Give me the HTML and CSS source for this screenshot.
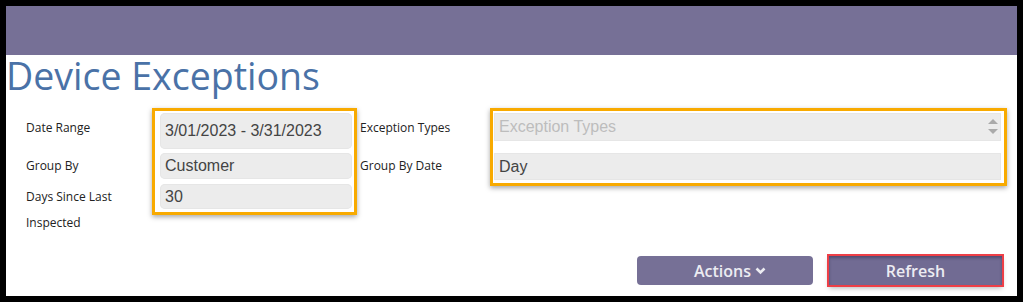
FILE: index.html
```html
<!DOCTYPE html>
<html lang="en">
<head>
  <meta charset="UTF-8">
  <title>Device Exceptions</title>
  <link rel="stylesheet" href="styles.css">
</head>
<body>
  <div class="frame">
    <div class="topbar"></div>
    <h1 class="title">Device Exceptions</h1>

    <div class="filters">
      <div class="label-col">
        <div class="lbl lbl-first">Date Range</div>
        <div class="lbl lbl-second">Group By</div>
        <div class="lbl lbl-wrap">Days Since Last<br>Inspected</div>
      </div>

      <div class="field-box box-left">
        <div class="field field-date">3/01/2023 - 3/31/2023</div>
        <div class="field field-group">Customer</div>
        <div class="field field-days">30</div>
      </div>

      <div class="label-col label-col-2">
        <div class="lbl lbl-first">Exception Types</div>
        <div class="lbl lbl-second">Group By Date</div>
      </div>

      <div class="field-box box-right">
        <div class="field field-types">
          <span class="placeholder">Exception Types</span>
          <span class="spinner">
            <svg width="12" height="18" viewBox="0 0 12 18">
              <path d="M1 6 L6 1 L11 6 Z" fill="#aaaaaa"/>
              <path d="M1 11 L11 11 L6 16 Z" fill="#aaaaaa"/>
            </svg>
          </span>
        </div>
        <div class="field field-bydate">Day</div>
      </div>
    </div>

    <div class="actions-row">
      <button class="btn btn-actions">Actions
        <svg class="chev" width="11" height="8" viewBox="0 0 11 8">
          <path d="M1.5 1.5 L5.5 5.5 L9.5 1.5" fill="none" stroke="#ececf2" stroke-width="2.6"/>
        </svg>
      </button>
      <button class="btn btn-refresh">Refresh</button>
    </div>
  </div>
</body>
</html>
```

FILE: styles.css
```css
* {
  box-sizing: border-box;
}
html, body {
  margin: 0;
  padding: 0;
  background-color: #000;
}
body {
  font-family: 'Open Sans', 'DejaVu Sans', sans-serif;
  color: #222;
}
.frame {
  margin: 6px;
  height: 290px;
  background-color: #fff;
}
.topbar {
  height: 49px;
  background-color: #767096;
}
.title {
  margin: -2px 0 9px 0;
  font-size: 37.5px;
  line-height: 46px;
  font-weight: 400;
  color: #4a72a7;
}
.filters {
  display: flex;
  align-items: flex-start;
  padding-left: 20px;
}
.label-col {
  width: 126px;
  font-size: 12px;
}
.label-col-2 {
  width: 133px;
  padding-left: 3px;
}
.lbl {
  line-height: 20px;
}
.lbl-first {
  margin-top: 10px;
}
.lbl-second {
  margin-top: 18px;
}
.lbl-wrap {
  margin-top: 8px;
  line-height: 26px;
}
.field-box {
  border: 3px solid #f8aa00;
  box-shadow: 0 2px 5px rgba(0, 0, 0, 0.35);
}
.box-left {
  width: 205px;
  padding: 2px 2px 3px 5px;
}
.box-right {
  width: 517px;
  padding: 2px 3px 3px 1px;
}
.field {
  display: flex;
  align-items: center;
  padding: 0 5px;
  background-color: #ececec;
  border-radius: 5px;
  box-shadow: inset 0 0 0 1px #e6e6e6;
  font-family: 'Liberation Sans', Arial, sans-serif;
  font-size: 16px;
  color: #444;
}
.field-date {
  height: 36px;
  margin-bottom: 4px;
}
.field-group {
  height: 26px;
  margin-bottom: 5px;
}
.field-days {
  height: 25px;
}
.field-types {
  height: 28px;
  margin-bottom: 12px;
  border-radius: 0;
  justify-content: space-between;
  padding-right: 2px;
}
.placeholder {
  color: #bdbdbd;
}
.spinner {
  display: flex;
  align-items: center;
}
.field-bydate {
  height: 27px;
  border-radius: 0;
}
.actions-row {
  display: flex;
  justify-content: flex-end;
  gap: 16px;
  margin-top: 20px;
  padding-right: 15px;
}
.btn {
  height: 29px;
  border: none;
  border-radius: 4px;
  background-color: #767096;
  color: #ececf2;
  font-family: 'Open Sans', 'DejaVu Sans', sans-serif;
  font-size: 16px;
  font-weight: 600;
  display: flex;
  align-items: center;
  justify-content: center;
  padding: 0;
}
.btn-actions {
  width: 176px;
  gap: 4px;
  padding-left: 10px;
}
.btn-refresh {
  width: 173px;
  border-radius: 0;
  background-color: #716b93;
  outline: 2px solid #ee3f47;
  box-shadow: inset 0 2px 3px rgba(40, 35, 70, 0.45), 0 3px 5px rgba(0, 0, 0, 0.3);
}
.chev {
  margin-top: 1px;
}
```
